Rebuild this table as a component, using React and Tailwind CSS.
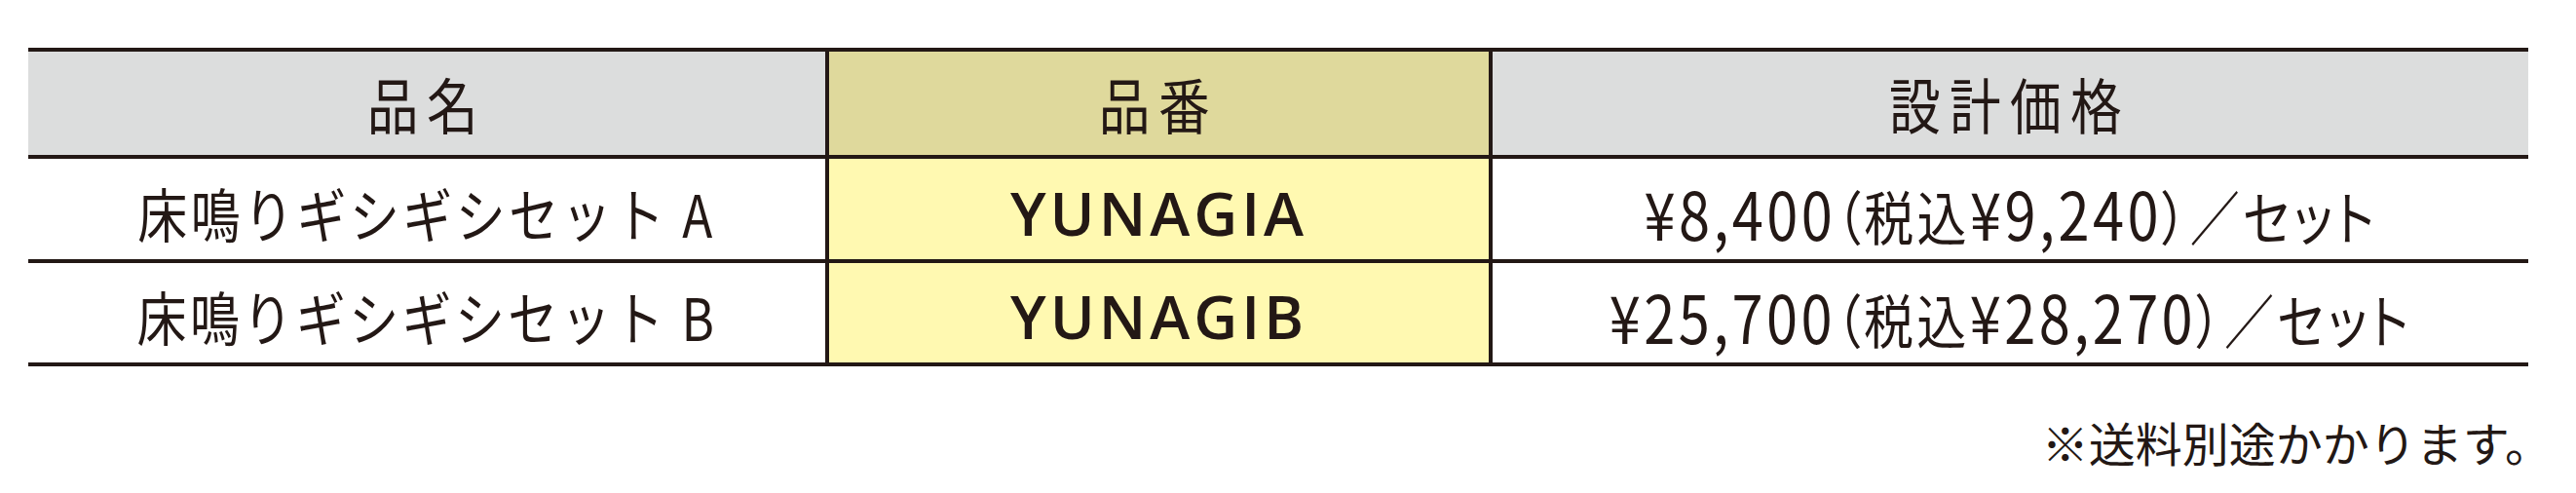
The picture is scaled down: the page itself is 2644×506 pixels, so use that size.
export default function App() {
  const jp = { fontFamily: '"Noto Sans CJK JP", "Noto Sans", sans-serif' };
  const Cond = ({ children, className = "", style }) => (
    <span className={"inline-block origin-center scale-x-[0.85] whitespace-nowrap " + className} style={style}>{children}</span>
  );
  const Num = ({ children }) => <span className="text-[68px]">{children}</span>;
  const rows = [
    {
      name: "床鳴りギシギシセット A",
      code: "YUNAGIA",
      price: (
        <>
          <Num>¥8,400</Num>（税込<Num>¥9,240</Num>）／セット
        </>
      ),
      h: "h-[107px]",
    },
    {
      name: "床鳴りギシギシセット B",
      code: "YUNAGIB",
      price: (
        <>
          <Num>¥25,700</Num>（税込<Num>¥28,270</Num>）／セット
        </>
      ),
      h: "h-[106px]",
    },
  ];
  return (
    <div className="w-[2644px] h-[506px] bg-white pt-[49px] pl-[29px] text-[#231815]" style={jp}>
      <div className="w-[2566px] border-t-4 border-[#231815]">
        <div className="flex h-[110px] border-b-4 border-[#231815]">
          <div className="w-[818px] bg-[#dcdddd] flex items-center justify-center">
            <Cond className="text-[62px] leading-none tracking-[10px]">品名</Cond>
          </div>
          <div className="w-[681px] border-l-4 border-[#231815] bg-[#dfd99c] flex items-center justify-center">
            <Cond className="text-[62px] leading-none tracking-[10px]">品番</Cond>
          </div>
          <div className="flex-1 border-l-4 border-[#231815] bg-[#dcdddd] flex items-center justify-center">
            <Cond className="text-[62px] leading-none tracking-[11px]">設計価格</Cond>
          </div>
        </div>
        {rows.map(({ name, code, price, h }) => (
          <div key={code} className={"flex border-b-4 border-[#231815] " + h}>
            <div className="w-[818px] bg-white flex items-center justify-center pt-[6px]">
              <Cond className="text-[60px] leading-none tracking-[4px]">{name}</Cond>
            </div>
            <div className="w-[681px] border-l-4 border-[#231815] bg-[#fff9b1] flex items-center justify-center pt-[6px]">
              <span
                className="text-[62px] leading-none font-semibold tracking-[4px]"
                style={{ fontFamily: '"Open Sans", "Noto Sans", sans-serif' }}
              >
                {code}
              </span>
            </div>
            <div className="flex-1 border-l-4 border-[#231815] bg-white flex items-center justify-center pt-[6px]">
              <Cond
                className="text-[60px] leading-none tracking-[4px]"
                style={{ fontFeatureSettings: '"palt"' }}
              >
                {price}
              </Cond>
            </div>
          </div>
        ))}
      </div>
      <div className="w-[2590px] flex justify-end mt-[53px]">
        <span className="text-[48px] leading-none">※送料別途かかります。</span>
      </div>
    </div>
  );
}
